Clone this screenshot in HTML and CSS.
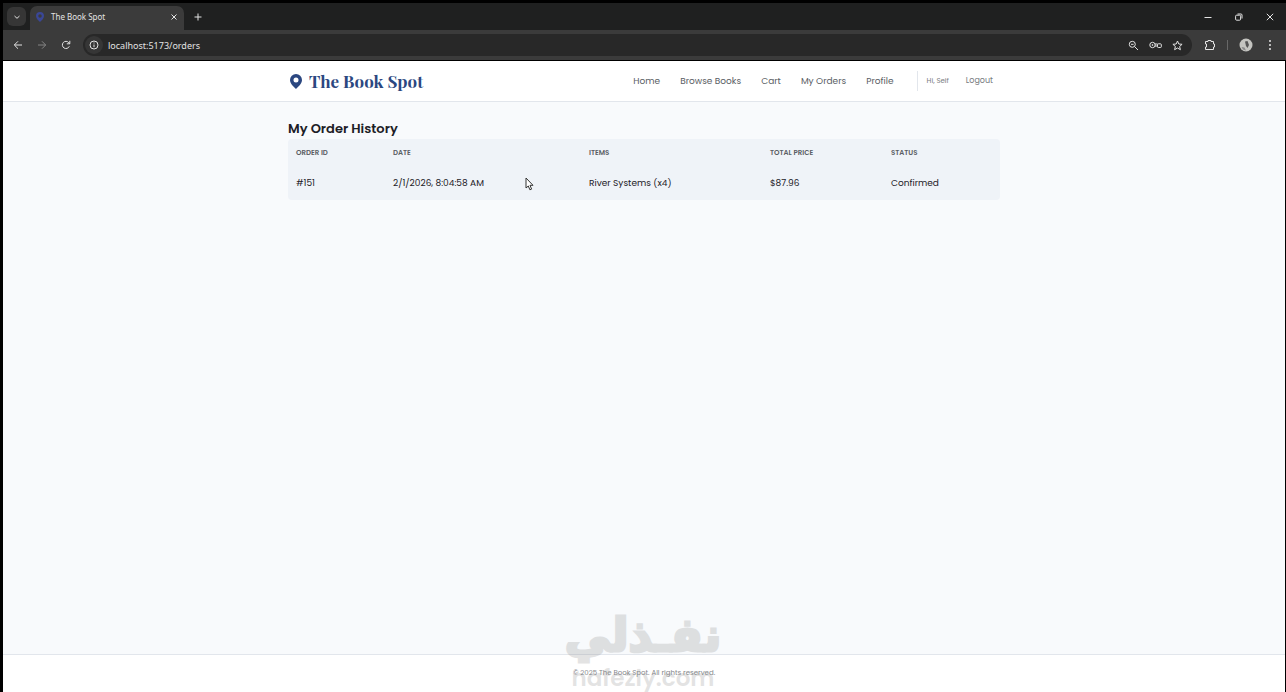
FILE: index.html
```html
<!DOCTYPE html>
<html lang="en">
<head>
    <meta charset="UTF-8" />
    <meta name="viewport" content="width=device-width, initial-scale=1.0" />
    <title>The Book Spot</title>
    <link rel="stylesheet" href="styles.css">
</head>
<body>
    <div class="browser">
        <div class="tab-bar">
            <button class="tab-search" aria-label="Search tabs">
                <svg width="8" height="8" viewBox="0 0 8 8"><path d="M1.500 3 4 5.300 6.500 3" /></svg>
            </button>
            <div class="tab">
                <svg class="favicon" width="8" height="10" viewBox="0 0 16 20"><path fill-rule="evenodd" d="M8 0a8 8 0 0 0-8 8c0 5 5 9 8 12 3-3 8-7 8-12a8 8 0 0 0-8-8zm0 4.500a3.500 3.500 0 1 1 0 7 3.500 3.500 0 0 1 0-7z" /></svg>
                <span class="tab-title">The Book Spot</span>
                <button class="icon-btn" aria-label="Close tab">
                    <svg width="8" height="8" viewBox="0 0 8 8"><path d="M1.500 1.500l5 5M6.500 1.500l-5 5" /></svg>
                </button>
            </div>
            <button class="icon-btn new-tab" aria-label="New tab">
                <svg width="8" height="8" viewBox="0 0 8 8"><path d="M4 .5v7M.5 4h7" /></svg>
            </button>
            <div class="window-controls">
                <button class="icon-btn" aria-label="Minimize">
                    <svg width="8" height="8" viewBox="0 0 8 8"><path d="M.5 4.500h7" /></svg>
                </button>
                <button class="icon-btn" aria-label="Restore">
                    <svg width="8" height="8" viewBox="0 0 8 8"><rect x=".6" y="2.200" width="5" height="5" rx="1" /><path d="M2.500 1h3.500a1 1 0 0 1 1 1v3.500" /></svg>
                </button>
                <button class="icon-btn" aria-label="Close">
                    <svg width="8" height="8" viewBox="0 0 8 8"><path d="M.8.8l6.400 6.400M7.200.8.8 7.200" /></svg>
                </button>
            </div>
        </div>

        <div class="toolbar">
            <div class="nav-buttons">
                <button class="icon-btn" aria-label="Back">
                    <svg width="10" height="10" viewBox="0 0 10 10"><path d="M9 5H1.500M5 1.300 1.300 5 5 8.700" /></svg>
                </button>
                <button class="icon-btn dim" aria-label="Forward">
                    <svg width="10" height="10" viewBox="0 0 10 10"><path d="M1 5h7.500M5 1.300 8.700 5 5 8.700" /></svg>
                </button>
                <button class="icon-btn" aria-label="Reload">
                    <svg width="10" height="10" viewBox="0 0 10 10"><path d="M8.300 6.300A3.600 3.600 0 1 1 7.800 2.700L8.700 3.700M8.800.8v3H5.800" /></svg>
                </button>
            </div>
            <div class="address-bar">
                <span class="site-info">
                    <svg width="10" height="10" viewBox="0 0 10 10"><circle cx="5" cy="5" r="4" /><path d="M5 4.500v2.700M5 2.500v1" /></svg>
                </span>
                <input type="text" id="url" aria-label="Address" value="localhost:5173/orders" />
                <button class="icon-btn" aria-label="Zoom">
                    <svg width="11" height="11" viewBox="0 0 11 11"><circle cx="4.300" cy="4.300" r="3" /><path d="M6.500 6.500l3.500 3.500M3 4.300h2.600" /></svg>
                </button>
                <button class="icon-btn" aria-label="Passwords">
                    <svg width="13" height="10" viewBox="0 0 13 10"><circle cx="3.500" cy="5" r="2.700" /><circle cx="3.500" cy="5" r=".5" /><path d="M6 4h2.500M6 6h2.500" /><rect x="8.500" y="3.800" width="3.800" height="3.700" rx=".8" /></svg>
                </button>
                <button class="icon-btn" aria-label="Bookmark">
                    <svg width="11" height="11" viewBox="0 0 11 11"><path d="M5.500 1l1.300 3 3.300.3-2.500 2.200.8 3.200-2.900-1.700-2.900 1.700.8-3.200L.9 4.300 4.200 4z" /></svg>
                </button>
            </div>
            <div class="extras">
                <button class="icon-btn" aria-label="Extensions">
                    <svg width="12" height="12" viewBox="0 0 12 12"><path d="M1.500 2.500h2.500v-1h3v1h2.500v2.500h1v3h-1v2.500h-8V8h1V5h-1z" stroke-linejoin="round" /></svg>
                </button>
                <span class="separator"></span>
                <button class="icon-btn" aria-label="Account">
                    <svg class="avatar" width="14" height="14" viewBox="0 0 14 14"><circle cx="7" cy="7" r="6.500" fill="#c4c4c0" /><path d="M6 3.500 8.500 3 10 7l-1.500 3L7 8z" fill="#555" /><path d="M2.500 9l3 .5 1.500 3-3-1z" fill="#888" /></svg>
                </button>
                <button class="icon-btn" aria-label="Menu">
                    <svg class="dots" width="4" height="12" viewBox="0 0 4 12"><circle cx="2" cy="2" r="1" /><circle cx="2" cy="6" r="1" /><circle cx="2" cy="10" r="1" /></svg>
                </button>
            </div>
        </div>
    </div>

    <div class="page">
        <header class="header">
            <div class="container header-inner">
                <a class="logo" href="#">
                    <svg width="12" height="15" viewBox="0 0 12 15"><path fill-rule="evenodd" d="M6 0a6 6 0 0 0-6 6c0 3.700 3.500 6.500 6 9 2.500-2.500 6-5.300 6-9a6 6 0 0 0-6-6zm0 3.500a2.500 2.500 0 1 1 0 5 2.500 2.500 0 0 1 0-5z" /></svg>
                    <span>The Book Spot</span>
                </a>
                <nav class="nav">
                    <a href="#">Home</a>
                    <a href="#">Browse Books</a>
                    <a href="#">Cart</a>
                    <a href="#">My Orders</a>
                    <a href="#">Profile</a>
                </nav>
                <div class="user">
                    <span class="greeting">Hi, Seif</span>
                    <button class="logout">Logout</button>
                </div>
            </div>
        </header>

        <main class="container main">
            <h1>My Order History</h1>
            <table class="orders">
                <thead>
                    <tr>
                        <th class="col-id">Order ID</th>
                        <th class="col-date">Date</th>
                        <th class="col-items">Items</th>
                        <th class="col-total">Total Price</th>
                        <th class="col-status">Status</th>
                    </tr>
                </thead>
                <tbody>
                    <tr>
                        <td>#151</td>
                        <td>2/1/2026, 8:04:58 AM</td>
                        <td>River Systems (x4)</td>
                        <td>$87.96</td>
                        <td>Confirmed</td>
                    </tr>
                </tbody>
            </table>
        </main>

        <footer class="footer">
            <p>&copy; 2025 The Book Spot. All rights reserved.</p>
        </footer>
    </div>

    <!-- Watermark -->
    <div class="watermark">
        <span class="watermark-ar" lang="ar" dir="rtl">نفـذلي</span>
        <span class="watermark-en">nafezly.com</span>
    </div>

    <!-- Mouse pointer -->
    <svg class="pointer" width="9" height="14" viewBox="0 0 9 14"><path d="M1 1v10l2.300-2 1.600 3.800 1.700-.7L5 8.300h3z" /></svg>
</body>
</html>
```

FILE: styles.css
```css
:root {
    --chrome-dark: #1f2020;
    --chrome: #3b3b3b;
    --chrome-field: #282828;
    --page-bg: #f8fafc;
    --row-bg: #eff3f8;
    --border: #e2e6ec;
    --brand: #2b4780;
    --text: #1c2026;
    --muted: #5a5e64;
}

* {
    box-sizing: border-box;
}

body {
    margin: 0;
    min-height: 100vh;
    display: flex;
    flex-direction: column;
    position: relative;
    background: #000;
    color: var(--text);
    font-family: Poppins, Inter, sans-serif;
    font-size: 9px;
}

button {
    padding: 0;
    border: none;
    background: none;
    color: inherit;
    font: inherit;
    cursor: pointer;
}

a {
    color: inherit;
    text-decoration: none;
}

/* Browser window */
.browser {
    padding: 3px 0 1px 3px;
    color: #e3e3e3;
    font-family: "Noto Sans", sans-serif;
}

.browser svg {
    display: block;
    fill: none;
    stroke: currentColor;
}

.tab-bar {
    display: flex;
    align-items: center;
    height: 27px;
    padding-left: 4px;
    background: var(--chrome-dark);
}

.tab-search {
    display: flex;
    align-items: center;
    justify-content: center;
    width: 19px;
    height: 19px;
    border-radius: 6px;
    background: #363636;
}

.tab {
    display: flex;
    align-items: center;
    align-self: flex-end;
    width: 154px;
    height: 24px;
    margin-left: 4px;
    padding: 0 6px 3px;
    border-radius: 7px 7px 0 0;
    background: var(--chrome);
}

.tab .favicon {
    fill: #3a4796;
    stroke: none;
}

.tab-title {
    flex: 1;
    margin-left: 7px;
    font-size: 8px;
}

.icon-btn {
    display: flex;
    align-items: center;
    justify-content: center;
}

.new-tab {
    margin-left: 10px;
}

.window-controls {
    display: flex;
    gap: 23px;
    margin-left: auto;
    padding-right: 12px;
}

.toolbar {
    display: flex;
    align-items: center;
    height: 30px;
    padding: 0 14px 0 10px;
    background: var(--chrome);
}

.nav-buttons {
    display: flex;
    gap: 14px;
}

.dim {
    color: #858585;
}

.address-bar {
    flex: 1;
    display: flex;
    align-items: center;
    gap: 10px;
    height: 22px;
    margin: 0 12px;
    padding: 0 9px 0 2px;
    border-radius: 11px;
    background: var(--chrome-field);
}

.site-info {
    display: flex;
    align-items: center;
    justify-content: center;
    width: 18px;
    height: 18px;
    border-radius: 9px;
    background: #363636;
}

.address-bar input {
    flex: 1;
    min-width: 0;
    margin-left: -5px;
    padding: 0;
    border: none;
    outline: none;
    background: none;
    color: #e3e3e3;
    font-family: "Noto Sans", sans-serif;
    font-size: 9px;
}

.extras {
    display: flex;
    align-items: center;
    gap: 11px;
}

.separator {
    width: 1px;
    height: 10px;
    background: #686868;
}

.extras .avatar,
.extras .dots {
    stroke: none;
}

.extras .dots {
    fill: currentColor;
}

.extras .icon-btn:last-child {
    margin-left: 4px;
}

/* Page */
.page {
    flex: 1;
    display: flex;
    flex-direction: column;
    margin: 0 1px 0 3px;
    background: var(--page-bg);
}

.container {
    width: 100%;
    max-width: 712px;
    margin: 0 auto;
}

.header {
    border-bottom: 1px solid var(--border);
    background: #fff;
}

.header-inner {
    display: flex;
    align-items: center;
    height: 40px;
    padding: 0 7px 0 2px;
}

.logo {
    display: flex;
    align-items: center;
    gap: 7px;
    margin-right: auto;
    color: var(--brand);
    font-family: "Playfair Display", "DM Serif Display", "Liberation Serif", serif;
    font-size: 17px;
    font-weight: bold;
}

.logo svg {
    fill: var(--brand);
}

.nav {
    display: flex;
    gap: 20px;
    color: var(--muted);
}

.user {
    display: flex;
    align-items: center;
    gap: 17px;
    height: 20px;
    margin-left: 23px;
    padding-left: 9px;
    border-left: 1px solid var(--border);
    color: #777b80;
}

.greeting {
    font-size: 7px;
}

.logout {
    font-size: 8px;
}

.main {
    flex: 1;
    padding-top: 17px;
}

h1 {
    margin: 0;
    font-size: 13px;
    font-weight: 600;
    line-height: 20px;
}

.orders {
    width: 100%;
    table-layout: fixed;
    border-collapse: collapse;
    border-radius: 4px;
    background: var(--row-bg);
}

.orders th,
.orders td {
    padding: 0 8px;
    text-align: left;
}

.orders th {
    height: 27px;
    color: var(--muted);
    font-size: 7px;
    font-weight: 600;
    text-transform: uppercase;
}

.orders td {
    height: 34px;
}

.col-id {
    width: 97px;
}

.col-date {
    width: 196px;
}

.col-items {
    width: 181px;
}

.col-total {
    width: 121px;
}

.footer {
    height: 38px;
    border-top: 1px solid var(--border);
    background: #fff;
    color: #85888c;
    font-size: 7px;
    text-align: center;
}

.footer p {
    margin: 0;
    line-height: 36px;
}

/* Watermark over the page */
.watermark {
    position: absolute;
    bottom: 0;
    left: 50%;
    display: flex;
    flex-direction: column;
    align-items: center;
    transform: translateX(-50%);
    color: #888;
    opacity: 0.23;
    font-weight: bold;
    pointer-events: none;
}

.watermark-ar {
    font-family: "DejaVu Sans", sans-serif;
    font-size: 46px;
    line-height: 58px;
    -webkit-text-stroke: 3px #888;
}

.watermark-en {
    font-family: Poppins, Inter, sans-serif;
    font-size: 23px;
    font-weight: 600;
    line-height: 28px;
}

.pointer {
    position: absolute;
    top: 177px;
    left: 525px;
    fill: #fff;
    stroke: #333;
}
```
